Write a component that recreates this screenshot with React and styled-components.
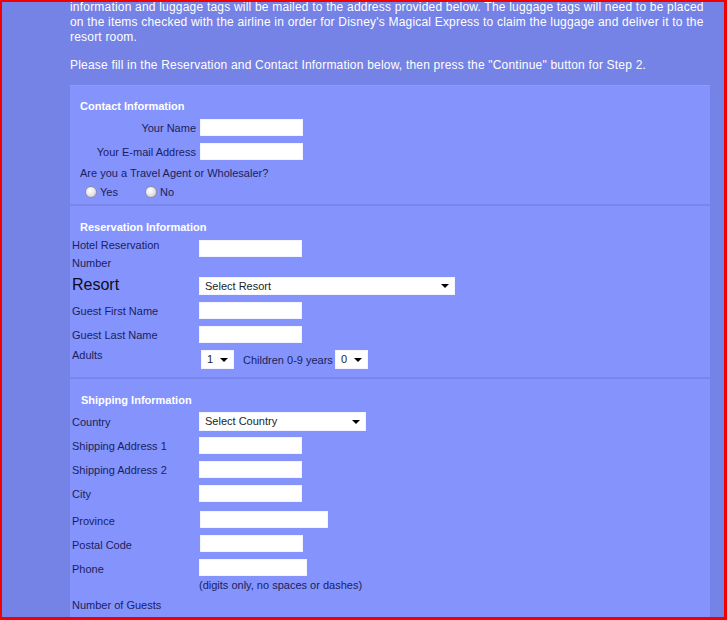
import React from "react";
import styled, { createGlobalStyle } from "styled-components";

const GlobalStyle = createGlobalStyle`
  html, body {
    margin: 0;
    padding: 0;
  }
  body {
    font-family: "Liberation Sans", Arial, sans-serif;
  }
`;

const App = () => {
  return (
    <>
      <GlobalStyle />
      <Frame>
        <Intro>
          information and luggage tags will be mailed to the address provided below. The luggage tags will need to be placed
          <br />
          on the items checked with the airline in order for Disney's Magical Express to claim the luggage and deliver it to the
          <br />
          resort room.
        </Intro>
        <Intro second>
          Please fill in the Reservation and Contact Information below, then press the "Continue" button for Step 2.
        </Intro>

        <Panel>
          {/* Contact */}
          <Section top={13} bottom={6}>
            <Heading>Contact Information</Heading>
            <ContactRow gap={6}>
              <RightLabel>Your Name</RightLabel>
              <TextBox />
            </ContactRow>
            <ContactRow gap={7}>
              <RightLabel>Your E-mail Address</RightLabel>
              <TextBox />
            </ContactRow>
            <Question>Are you a Travel Agent or Wholesaler?</Question>
            <RadioRow>
              <RadioOption>
                <RadioDot />
                Yes
              </RadioOption>
              <RadioOption>
                <RadioDot />
                No
              </RadioOption>
            </RadioRow>
          </Section>

          {/* Reservation */}
          <Section top={14} bottom={8}>
            <Heading>Reservation Information</Heading>
            <FieldRow gap={2} align="flex-start">
              <Label tall>
                Hotel Reservation
                <br />
                Number
              </Label>
              <TextBox nudge={4} />
            </FieldRow>
            <FieldRow gap={5}>
              <Label big>Resort</Label>
              <Dropdown width={256} height={18}>
                Select Resort
              </Dropdown>
            </FieldRow>
            <FieldRow gap={7}>
              <Label>Guest First Name</Label>
              <TextBox />
            </FieldRow>
            <FieldRow gap={7}>
              <Label>Guest Last Name</Label>
              <TextBox />
            </FieldRow>
            <FieldRow gap={5} align="flex-start">
              <Label>Adults</Label>
              <Inline>
                <Dropdown width={33} height={19} shift={2}>
                  1
                </Dropdown>
                <InlineText>Children 0-9 years</InlineText>
                <Dropdown width={33} height={19}>
                  0
                </Dropdown>
              </Inline>
            </FieldRow>
          </Section>

          {/* Shipping */}
          <Section top={14} bottom={40} last>
            <Heading shift={1}>Shipping Information</Heading>
            <FieldRow gap={5}>
              <Label>Country</Label>
              <Dropdown width={167} height={19}>
                Select Country
              </Dropdown>
            </FieldRow>
            <FieldRow gap={6}>
              <Label>Shipping Address 1</Label>
              <TextBox />
            </FieldRow>
            <FieldRow gap={7}>
              <Label>Shipping Address 2</Label>
              <TextBox />
            </FieldRow>
            <FieldRow gap={7}>
              <Label>City</Label>
              <TextBox />
            </FieldRow>
            <FieldRow gap={9}>
              <Label low>Province</Label>
              <TextBox width={128} shift={1} />
            </FieldRow>
            <FieldRow gap={7}>
              <Label low>Postal Code</Label>
              <TextBox shift={1} />
            </FieldRow>
            <FieldRow gap={7}>
              <Label low>Phone</Label>
              <TextBox width={108} />
            </FieldRow>
            <Hint>(digits only, no spaces or dashes)</Hint>
            <Plain>Number of Guests</Plain>
          </Section>
        </Panel>
      </Frame>
    </>
  );
};

const Frame = styled.div`
  box-sizing: border-box;
  width: 727px;
  height: 620px;
  overflow: hidden;
  background: #7582e6;
  border-style: solid;
  border-color: #f20000;
  border-width: 2px 3px 3px 2px;
  padding: 0 14px 0 68px;
`;

const Intro = styled.p`
  margin: ${(p) => (p.second ? "13px 0 0" : "-2px 0 0")};
  font-size: 12px;
  line-height: 15px;
  letter-spacing: 0.2px;
  color: #ffffff;
  white-space: nowrap;
`;

const Panel = styled.div`
  margin-top: 12px;
  width: 640px;
  background: #8494fc;
  border-top: 1px solid #8c9bff;
`;

const Section = styled.div`
  padding: ${(p) => p.top}px 0 ${(p) => p.bottom}px 2px;
  border-bottom: ${(p) => (p.last ? "none" : "2px solid #7986ec")};
`;

const Heading = styled.div`
  padding-left: ${(p) => 8 + (p.shift || 0)}px;
  font-size: 11px;
  line-height: 14px;
  font-weight: bold;
  color: #ffffff;
`;

const ContactRow = styled.div`
  display: flex;
  align-items: center;
  gap: 4px;
  margin-top: ${(p) => p.gap}px;
  padding-left: 8px;
`;

const RightLabel = styled.span`
  width: 116px;
  text-align: right;
  font-size: 11px;
  color: #1b1e5c;
`;

const TextBox = styled.input`
  box-sizing: border-box;
  width: ${(p) => p.width || 103}px;
  height: 17px;
  margin: ${(p) => p.nudge || 0}px 0 0 ${(p) => p.shift || 0}px;
  padding: 0 3px;
  border: 1px solid #f2f4ff;
  background: #ffffff;
  font-size: 11px;
  outline: none;
`;

const Question = styled.div`
  margin-top: 6px;
  padding-left: 8px;
  font-size: 11px;
  line-height: 14px;
  color: #1b1e5c;
`;

const RadioRow = styled.div`
  display: flex;
  gap: 22px;
  margin-top: 5px;
  padding-left: 13px;
  height: 13px;
`;

const RadioOption = styled.label`
  display: flex;
  align-items: center;
  gap: 3px;
  width: 38px;
  font-size: 11px;
  color: #1b1e5c;
`;

const RadioDot = styled.span`
  box-sizing: border-box;
  width: 12px;
  height: 12px;
  border-radius: 50%;
  border: 1px solid #8d8f9c;
  background: radial-gradient(circle at 40% 35%, #ffffff 0%, #e4e4e8 55%, #b9bac4 100%);
`;

const FieldRow = styled.div`
  display: flex;
  align-items: ${(p) => p.align || "center"};
  margin-top: ${(p) => p.gap}px;
`;

const Label = styled.span`
  width: 127px;
  flex-shrink: 0;
  font-size: ${(p) => (p.big ? "16px" : "11px")};
  line-height: ${(p) => (p.tall ? "18px" : "14px")};
  color: ${(p) => (p.big ? "#0c0c1e" : "#1b1e5c")};
  padding-top: ${(p) => (p.low ? "2px" : "0")};
  padding-bottom: ${(p) => (p.big ? "2px" : "0")};
`;

const Dropdown = styled.div`
  position: relative;
  box-sizing: border-box;
  width: ${(p) => p.width}px;
  height: ${(p) => p.height}px;
  margin-left: ${(p) => p.shift || 0}px;
  padding: 0 14px 0 5px;
  background: #ffffff;
  border: 1px solid #f2f4ff;
  font-size: 11px;
  line-height: ${(p) => p.height - 2}px;
  color: #1c1c2c;
  white-space: nowrap;

  &::after {
    content: "";
    position: absolute;
    right: 5px;
    top: 50%;
    margin-top: -2px;
    border-left: 4px solid transparent;
    border-right: 4px solid transparent;
    border-top: 4px solid #000000;
  }
`;

const Inline = styled.div`
  display: flex;
  align-items: center;
  margin-top: 2px;
`;

const InlineText = styled.span`
  margin: 0 2px 0 9px;
  font-size: 11px;
  color: #1b1e5c;
`;

const Hint = styled.div`
  margin-top: 2px;
  padding-left: 127px;
  font-size: 11px;
  line-height: 14px;
  color: #1b1e5c;
`;

const Plain = styled.div`
  margin-top: 6px;
  font-size: 11px;
  line-height: 14px;
  color: #1b1e5c;
`;

export default App;
